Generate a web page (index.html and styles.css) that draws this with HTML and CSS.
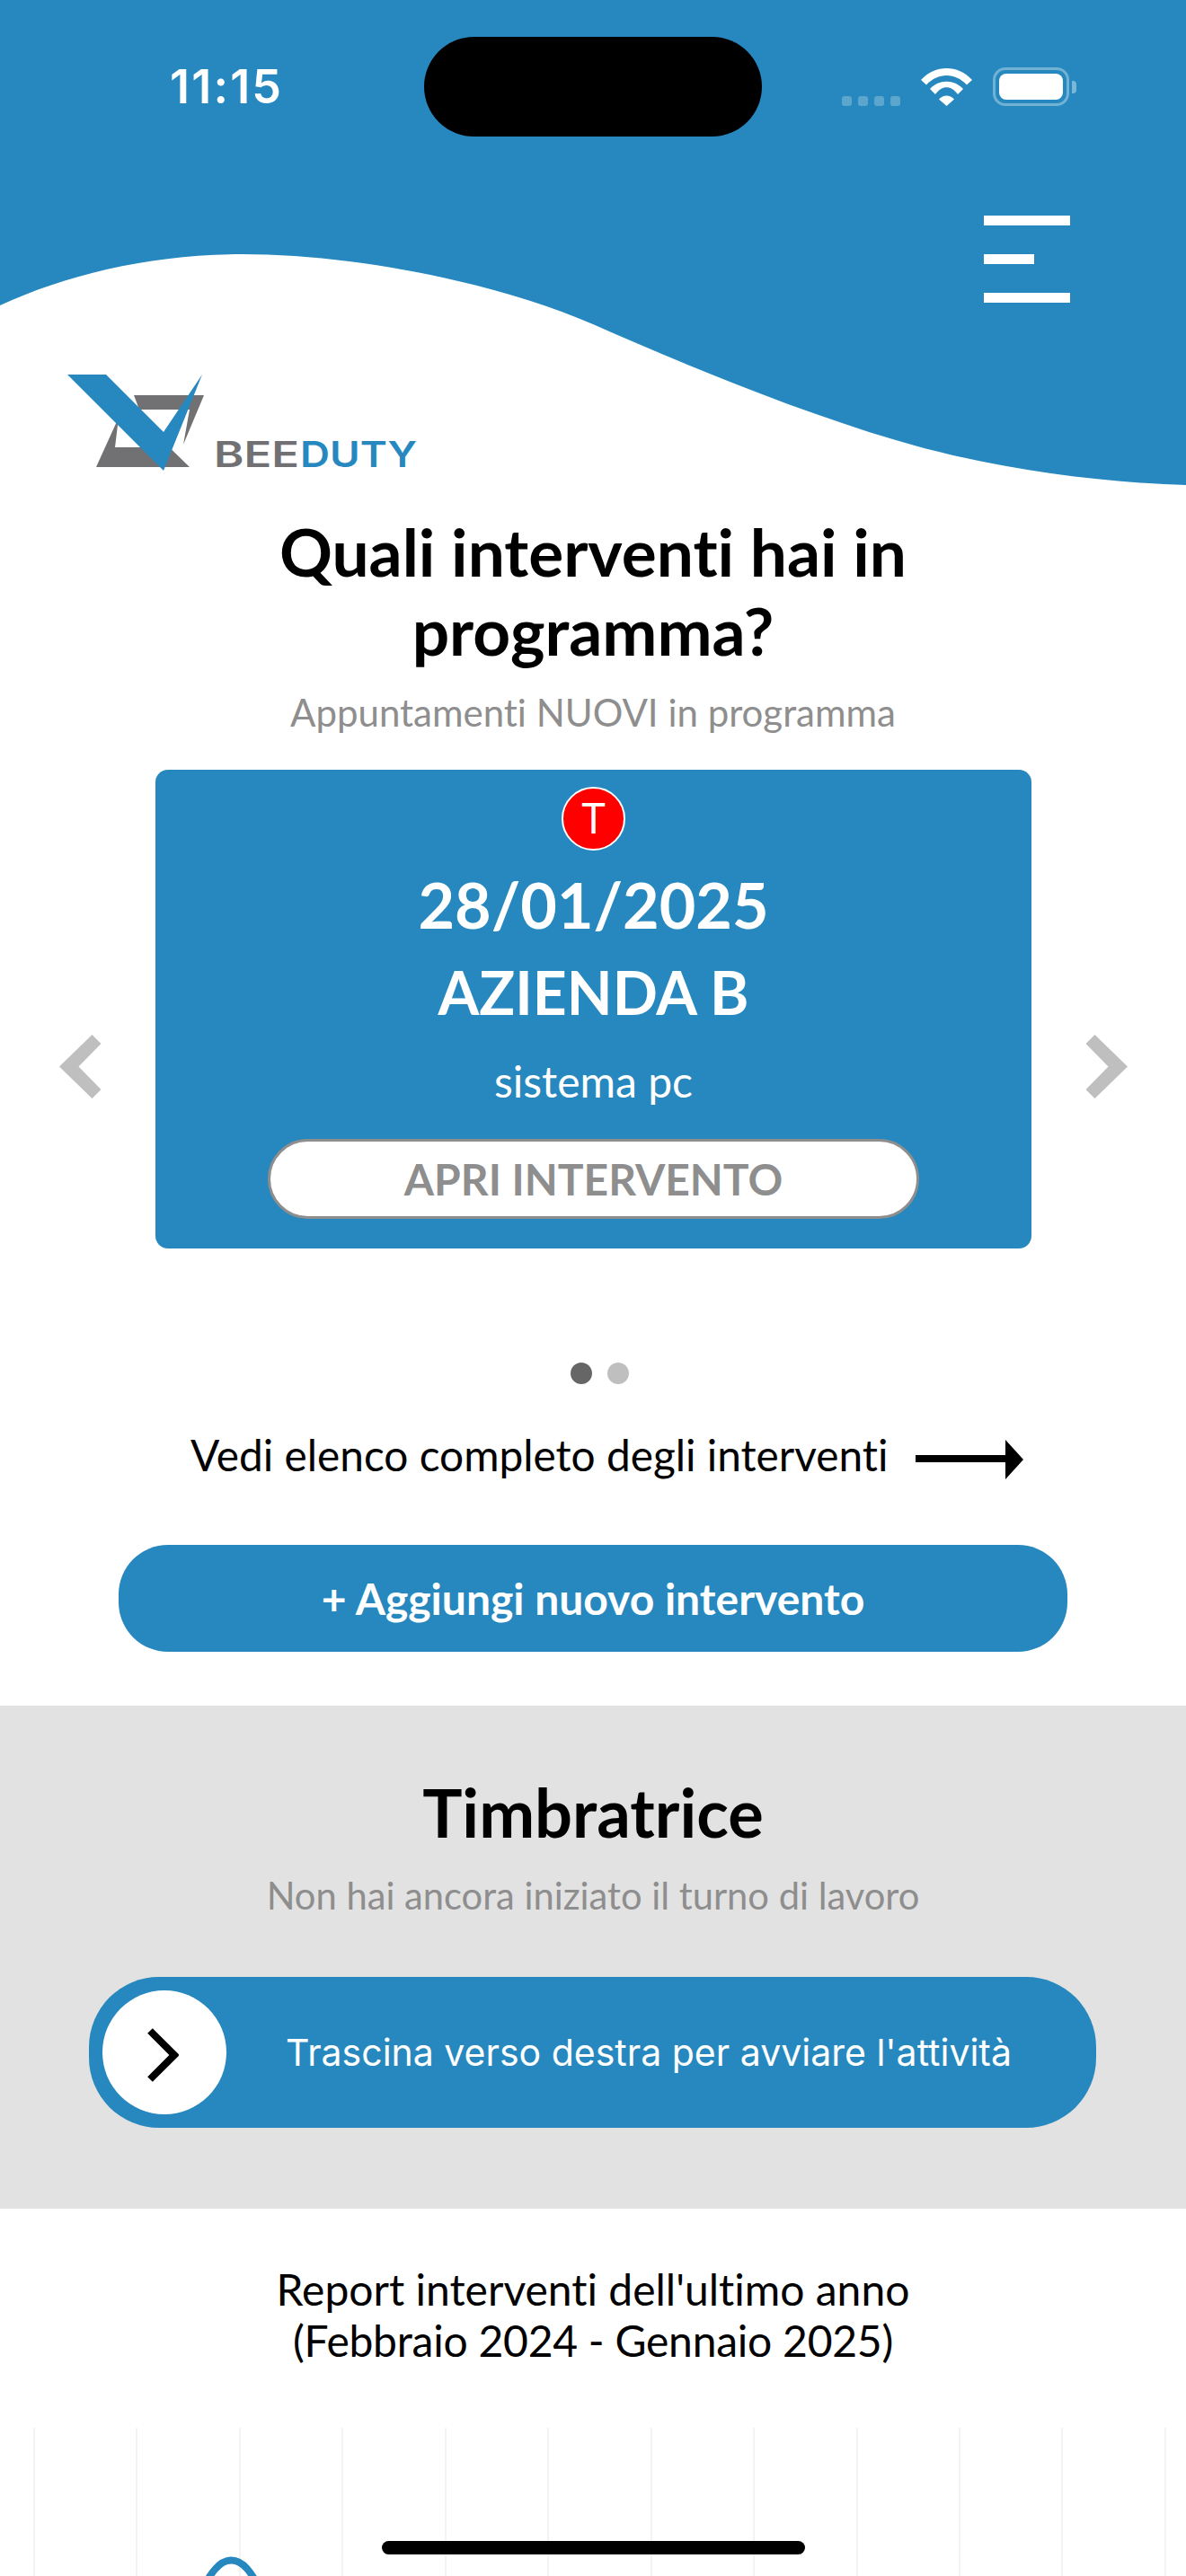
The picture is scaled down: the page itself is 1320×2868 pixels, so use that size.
FILE: index.html
```html
<!DOCTYPE html>
<html lang="it">
<head>
  <meta charset="UTF-8" />
  <meta name="viewport" content="width=device-width, initial-scale=1" />
  <title>BeeDuty</title>
  <link rel="stylesheet" href="styles.css">
</head>
<body>

  <header class="hero">
    <svg class="wave" viewBox="0 0 1320 540" width="1320" height="540">
      <path fill="#2688be" d="M0 0H1320V540C1220 537 1100 521 997 490C880 455 760 405 660 361C560 317 400 283 269 283C170 283 75 305 0 340Z"/>
    </svg>

    <div class="status-bar">
      <div class="status-time">11:15</div>
      <div class="island"></div>
      <div class="status-icons">
        <div class="signal"><span></span><span></span><span></span><span></span></div>
        <svg class="wifi" viewBox="0 0 57 42" width="57" height="42">
          <path fill="#fff" d="M0 13C16-4.300 41-4.300 57 13L51 18.500C38 4.500 19 4.500 6 18.500Z"/>
          <path fill="#fff" d="M10 23C20 12 37 12 47 23L41 29C33.500 18.500 23.500 18.500 16 29Z"/>
          <path fill="#fff" d="M20 34.500C25 29 32 29 37 34.500L28.500 42Z"/>
        </svg>
        <div class="battery"><div class="battery-fill"></div></div>
        <div class="battery-nub"></div>
      </div>
    </div>

    <div class="menu-row">
      <div class="menu-btn">
        <span></span>
        <span class="short"></span>
        <span></span>
      </div>
    </div>

    <svg class="logo" viewBox="75 417 389 120" width="389" height="120">
      <path fill="#717174" d="M149 440H227L204 495L211 456H155ZM107 520L132 465L128 498H156L170 480L211 520Z"/>
      <path fill="#2688be" d="M75 417H118L182 481L225 417L182 524Z"/>
      <text class="logo-text" x="238" y="520" textLength="95" lengthAdjust="spacingAndGlyphs" fill="#717174">BEE</text>
      <text class="logo-text" x="334" y="520" textLength="130" lengthAdjust="spacingAndGlyphs" fill="#2688be">DUTY</text>
    </svg>
  </header>

  <section class="programma">
    <h1>Quali interventi hai in<br>programma?</h1>
    <p class="sub">Appuntamenti NUOVI in programma</p>

    <div class="carousel">
      <svg class="nav-arrow" viewBox="0 0 47 71" width="47" height="71">
        <polygon fill="#bfbfbf" points="0,35.500 36.500,0 46.500,10 21.500,35.500 46.500,61 36.500,71"/>
      </svg>
      <div class="card">
        <div class="badge">T</div>
        <div class="card-date">28/01/2025</div>
        <div class="card-name">AZIENDA B</div>
        <div class="card-desc">sistema pc</div>
        <button class="card-btn">APRI INTERVENTO</button>
      </div>
      <svg class="nav-arrow" viewBox="0 0 47 71" width="47" height="71">
        <polygon fill="#bfbfbf" points="47,35.500 10.500,0 .5,10 25.500,35.500 .5,61 10.500,71"/>
      </svg>
    </div>

    <div class="dots">
      <span class="dot active"></span>
      <span class="dot"></span>
    </div>

    <div class="elenco">
      <span>Vedi elenco completo degli interventi</span>
      <svg viewBox="0 0 120 44" width="120" height="44">
        <rect x="0" y="17" width="102" height="8" fill="#000"/>
        <polygon points="100,0 120,22 100,44" fill="#000"/>
      </svg>
    </div>

    <button class="add-btn">+ Aggiungi nuovo intervento</button>
  </section>

  <section class="timbratrice">
    <h2>Timbratrice</h2>
    <p class="sub">Non hai ancora iniziato il turno di lavoro</p>
    <div class="slider">
      <div class="knob">
        <svg viewBox="0 0 35 60" width="35" height="60">
          <polyline points="3,3 30,30 3,57" fill="none" stroke="#000" stroke-width="8"/>
        </svg>
      </div>
      <div class="slider-text">Trascina verso destra per avviare l'attività</div>
    </div>
  </section>

  <section class="report">
    <p class="report-title">Report interventi dell'ultimo anno<br><span class="report-period">(Febbraio 2024 - Gennaio 2025)</span></p>
    <div class="chart">
      <svg class="chart-line" viewBox="0 0 1320 165" width="1320" height="165">
        <path d="M222 185C235 160 245 147.500 257.500 147.500C270 147.500 280 160 292 185" fill="none" stroke="#2688be" stroke-width="8"/>
      </svg>
    </div>
  </section>

  <div class="home-indicator"></div>

</body>
</html>
```

FILE: styles.css
```css
* {
  box-sizing: border-box;
}
html, body {
  margin: 0;
  height: 2868px;
  overflow: hidden;
}
body {
  position: relative;
  font-family: 'Lato', sans-serif;
  font-variant-ligatures: none;
  background: #fff;
  color: #000;
}
h1, h2, p {
  margin: 0;
}
button {
  font-family: inherit;
  font-variant-ligatures: none;
  cursor: pointer;
}

/* header */
.hero {
  position: relative;
  height: 540px;
}
.wave {
  position: absolute;
  top: 0;
  left: 0;
}
.status-bar {
  position: relative;
  display: flex;
  align-items: center;
  padding-top: 41px;
}
.status-time {
  width: 472px;
  padding-left: 189px;
  font-family: 'Inter', sans-serif;
  font-size: 52px;
  font-weight: 600;
  letter-spacing: 2.200px;
  color: #fff;
}
.island {
  width: 376px;
  height: 111px;
  border-radius: 56px;
  background: #000;
}
.status-icons {
  display: flex;
  align-items: flex-end;
  padding-left: 89px;
}
.signal {
  display: flex;
  gap: 7px;
  margin-right: 23px;
}
.signal span {
  width: 11px;
  height: 11px;
  border-radius: 3px;
  background: rgba(255, 255, 255, 0.25);
}
.wifi {
  display: block;
  margin-right: 23px;
}
.battery {
  width: 85px;
  height: 43px;
  padding: 4px;
  border: 3px solid rgba(255, 255, 255, 0.35);
  border-radius: 14px;
}
.battery-fill {
  height: 100%;
  border-radius: 8px;
  background: #fff;
}
.battery-nub {
  width: 5px;
  height: 14px;
  margin: 0 0 14px 3px;
  border-radius: 0 4px 4px 0;
  background: rgba(255, 255, 255, 0.4);
}
.menu-row {
  position: relative;
  display: flex;
  justify-content: flex-end;
  padding: 88px 129px 0 0;
}
.menu-btn {
  display: flex;
  flex-direction: column;
  gap: 32px;
  width: 96px;
}
.menu-btn span {
  display: block;
  height: 11px;
  background: #fff;
}
.menu-btn .short {
  width: 56px;
}
.logo {
  position: absolute;
  top: 417px;
  left: 75px;
}
.logo-text {
  font-family: 'Inter', sans-serif;
  font-size: 39px;
  font-weight: 600;
}

/* interventi */
.programma {
  text-align: center;
}
h1, h2 {
  line-height: 88px;
  font-weight: 700;
}
h1 {
  padding-top: 30px;
  font-size: 73px;
}
h2 {
  font-size: 74px;
}
.sub {
  font-size: 42px;
  line-height: 50px;
  color: #8e8e8e;
}
.programma .sub {
  margin-top: 22px;
}
.carousel {
  display: flex;
  align-items: flex-start;
  gap: 60px;
  margin-top: 39px;
  padding-left: 66px;
}
.nav-arrow {
  flex: none;
  margin-top: 295px;
}
.card {
  flex: none;
  display: flex;
  flex-direction: column;
  align-items: center;
  width: 975px;
  height: 533px;
  padding-top: 19px;
  border-radius: 14px;
  background: #2688be;
  color: #fff;
}
.badge {
  width: 71px;
  height: 71px;
  border: 2px solid #fff;
  border-radius: 50%;
  background: #f00;
  font-family: 'Inter', sans-serif;
  font-size: 46px;
  line-height: 67px;
}
.card-date {
  margin-top: 15px;
  font-size: 70px;
  line-height: 90px;
  font-weight: 700;
}
.card-name {
  margin-top: 8px;
  font-size: 66px;
  line-height: 90px;
  font-weight: 700;
}
.card-desc {
  margin-top: 27px;
  font-size: 48px;
  line-height: 54px;
}
.card-btn {
  width: 725px;
  height: 89px;
  margin-top: 37px;
  border: 3px solid #8e8e8e;
  border-radius: 45px;
  background: #fff;
  color: #8e8e8e;
  font-size: 48px;
  font-weight: 700;
}
.dots {
  display: flex;
  justify-content: center;
  gap: 17px;
  margin-top: 127px;
  padding-left: 15px;
}
.dot {
  width: 24px;
  height: 24px;
  border-radius: 50%;
  background: #bfbfbf;
}
.dot.active {
  background: #666;
}
.elenco {
  display: flex;
  align-items: center;
  gap: 31px;
  margin-top: 49px;
  padding-left: 212px;
  font-size: 47.800px;
  line-height: 60px;
}
.elenco svg {
  margin-top: 10px;
}
.add-btn {
  display: block;
  width: 1056px;
  height: 119px;
  margin: 70px 0 0 132px;
  border: none;
  border-radius: 55px;
  background: #2688be;
  color: #fff;
  font-size: 48px;
  font-weight: 700;
}

/* timbratrice */
.timbratrice {
  height: 560px;
  margin-top: 60px;
  padding-top: 75px;
  background: #e2e2e2;
  text-align: center;
}
.timbratrice .sub {
  margin-top: 23px;
  font-size: 41.700px;
}
.slider {
  display: flex;
  align-items: center;
  width: 1121px;
  height: 168px;
  margin: 66px 0 0 99px;
  padding-left: 15px;
  border-radius: 78px;
  background: #2688be;
}
.knob {
  flex: none;
  display: flex;
  align-items: center;
  justify-content: center;
  width: 138px;
  height: 138px;
  border-radius: 50%;
  background: #fff;
}
.knob svg {
  margin: 6px 4px 0 0;
}
.slider-text {
  margin-left: 66px;
  font-family: 'Inter', sans-serif;
  font-size: 41px;
  color: #fff;
  white-space: nowrap;
}

/* report */
.report-title {
  padding-top: 61px;
  font-size: 48px;
  line-height: 57px;
  text-align: center;
}
.report-period {
  letter-spacing: -0.250px;
}
.chart {
  position: relative;
  height: 165px;
  margin-top: 69px;
  background: repeating-linear-gradient(to right, #f3f3f3 0, #f3f3f3 2px, transparent 2px, transparent 114.450px) 37px 0 no-repeat;
}
.chart-line {
  position: absolute;
  top: 0;
  left: 0;
}
.home-indicator {
  position: absolute;
  left: 425px;
  top: 2829px;
  width: 471px;
  height: 15px;
  border-radius: 8px;
  background: #000;
}
```
